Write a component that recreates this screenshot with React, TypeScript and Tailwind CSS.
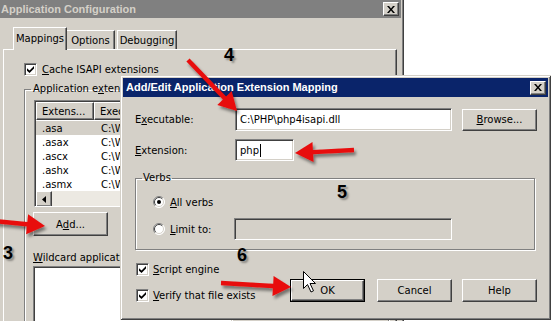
import React from "react";

const raised =
  "border border-t-white border-l-white border-r-[#404040] border-b-[#404040] shadow-[inset_-1px_-1px_0_#808080] bg-[#d4d0c8]";
const sunken =
  "border border-t-[#808080] border-l-[#808080] border-r-white border-b-white shadow-[inset_1px_1px_0_#404040,inset_-1px_-1px_0_#d4d0c8]";
const frame =
  "bg-[#d4d0c8] shadow-[inset_1px_1px_0_#d4d0c8,inset_-1px_-1px_0_#404040,inset_2px_2px_0_#ffffff,inset_-2px_-2px_0_#808080]";
const etched = "border border-[#808080] shadow-[inset_1px_1px_0_#ffffff,1px_1px_0_#ffffff]";
const titleFont = "font-['Liberation_Sans',Arial,sans-serif] font-bold text-[11px]";
const numFont =
  "absolute font-['Liberation_Sans',Arial,sans-serif] font-bold text-[18px] leading-none text-black [text-shadow:2px_2px_2px_rgba(0,0,0,0.35)]";

function CloseBtn() {
  return (
    <span className={`${raised} w-[16px] h-[14px] flex items-center justify-center`}>
      <svg width="8" height="7" viewBox="0 0 8 7">
        <path d="M0 0h2l2 2.5L6 0h2L5 3.5 8 7H6L4 4.5 2 7H0l3-3.5z" fill="black" />
      </svg>
    </span>
  );
}

function Check() {
  return (
    <span className={`${sunken} w-[13px] h-[13px] bg-white flex items-center justify-center shrink-0`}>
      <svg width="7" height="7" viewBox="0 0 7 7">
        <path d="M0 2.2 L2.5 4.6 L7 0 L7 2.6 L2.5 7 L0 4.8Z" fill="black" />
      </svg>
    </span>
  );
}

function Radio({ on }: { on?: boolean }) {
  return (
    <svg width="12" height="12" viewBox="0 0 12 12" className="shrink-0">
      <circle cx="6" cy="6" r="5.5" fill="white" />
      <path d="M2.1 9.9 A5.5 5.5 0 0 1 9.9 2.1" stroke="#808080" fill="none" />
      <path d="M9.9 2.1 A5.5 5.5 0 0 1 2.1 9.9" stroke="#ffffff" fill="none" />
      <path d="M2.8 9.2 A4.5 4.5 0 0 1 9.2 2.8" stroke="#404040" fill="none" />
      <path d="M9.2 2.8 A4.5 4.5 0 0 1 2.8 9.2" stroke="#d4d0c8" fill="none" />
      {on && <circle cx="6" cy="6" r="2" fill="black" />}
    </svg>
  );
}

function arrowPoints(x1: number, y1: number, x2: number, y2: number, w = 2.2, hl = 18, hw = 10) {
  const dx = x2 - x1;
  const dy = y2 - y1;
  const len = Math.hypot(dx, dy);
  const ux = dx / len;
  const uy = dy / len;
  const px = -uy;
  const py = ux;
  const bx = x2 - ux * hl;
  const by = y2 - uy * hl;
  const pts = [
    [x1 + px * w, y1 + py * w],
    [bx + px * w, by + py * w],
    [bx + px * hw, by + py * hw],
    [x2, y2],
    [bx - px * hw, by - py * hw],
    [bx - px * w, by - py * w],
    [x1 - px * w, y1 - py * w],
  ];
  return pts.map((p) => p.map((n) => n.toFixed(1)).join(",")).join(" ");
}

const ARROWS = [
  [-6, 221, 45, 226],
  [188, 60, 237, 111],
  [354, 150, 295, 153],
  [221, 283, 291, 287],
];

const EXTS = [".asa", ".asax", ".ascx", ".ashx", ".asmx"];

export default function App() {
  return (
    <div className="relative w-[551px] h-[321px] overflow-hidden bg-white font-['DejaVu_Sans',sans-serif] text-[10px] text-black">
      {/* Application Configuration (inactive, behind) */}
      <div className={`absolute left-[-4px] top-[-3px] w-[408px] h-[340px] p-[3px] ${frame}`}>
        <div className="h-[18px] bg-[#808080] flex items-center justify-between pl-[2px] pr-[2px]">
          <span className={`${titleFont} text-[#d4d0c8]`}>Application Configuration</span>
          <CloseBtn />
        </div>

        <div className="ml-[4px] w-[394px]">
          {/* tabs */}
          <div className="mt-[10px] h-[21px] flex items-end pl-[10px]">
            <div className="relative z-10 -mb-[1px] h-[23px] w-[54px] bg-[#d4d0c8] border-t border-l border-t-white border-l-white border-r border-r-[#404040] shadow-[inset_-1px_0_0_#808080] flex items-center justify-center pb-[2px]">
              Mappings
            </div>
            <div className="h-[19px] w-[48px] border-t border-t-white border-r border-r-[#404040] shadow-[inset_-1px_0_0_#808080] flex items-center justify-center">
              Options
            </div>
            <div className="ml-[2px] h-[19px] w-[60px] border-t border-l border-t-white border-l-white border-r border-r-[#404040] shadow-[inset_-1px_0_0_#808080] flex items-center justify-center">
              Debugging
            </div>
          </div>

          {/* tab panel */}
          <div className="h-[300px] border-t border-l border-t-white border-l-white border-r border-r-[#404040] shadow-[inset_-1px_0_0_#808080]">
            <div className="mt-[12px] ml-[20px] h-[14px] flex items-center gap-[4px]">
              <Check />
              <span className="ml-[1px]">
                <u>C</u>ache ISAPI extensions
              </span>
            </div>

            <fieldset className={`mt-[7px] ml-[20px] w-[365px] h-[260px] ${etched} border-b-0`}>
              <legend className="ml-[6px] px-[2px] leading-[12px]">
                Application e<u>x</u>tensions
              </legend>

              <div className={`mt-[5px] ml-[9px] w-[200px] h-[107px] bg-white ${sunken} p-[1px] flex flex-col overflow-hidden`}>
                <div className="flex h-[18px] shrink-0">
                  <div className={`${raised} w-[58px] shrink-0 flex items-center pl-[5px]`}>Extens...</div>
                  <div className={`${raised} w-[140px] shrink-0 flex items-center pl-[5px]`}>Executable Path</div>
                </div>
                <div className="flex-1 pt-[1px]">
                  {EXTS.map((e, i) => (
                    <div
                      key={e}
                      className={`flex h-[14px] items-center ${i === 0 ? "bg-[#d4d0c8]" : ""}`}
                    >
                      <span className="w-[58px] shrink-0 pl-[6px]">{e}</span>
                      <span className="shrink-0 pl-[7px] whitespace-nowrap">C:\WINDOWS\system32\inetsrv\asp.dll</span>
                    </div>
                  ))}
                </div>
                <div className="h-[16px] shrink-0 flex bg-[#ece9e2]">
                  <div className={`${raised} w-[16px] h-[16px] flex items-center justify-center`}>
                    <svg width="4" height="7" viewBox="0 0 4 7">
                      <path d="M4 0v7L0 3.5z" fill="black" />
                    </svg>
                  </div>
                </div>
              </div>

              <div className={`${raised} mt-[5px] ml-[8px] w-[75px] h-[24px] flex items-center justify-center`}>
                A<u>d</u>d...
              </div>

              <div className="mt-[16px] ml-[8px] leading-[12px] whitespace-nowrap">
                <u>W</u>ildcard application maps (order of implementation):
              </div>
              <div className={`mt-[2px] ml-[8px] w-[200px] h-[70px] bg-white ${sunken}`} />
            </fieldset>
          </div>
        </div>
      </div>

      {/* Add/Edit Application Extension Mapping (active, front) */}
      <div className={`absolute left-[120px] top-[75px] w-[431px] h-[245px] p-[3px] ${frame}`}>
        <div className="h-[19px] bg-[#0a246a] flex items-center justify-between pl-[3px] pr-[2px]">
          <span className={`${titleFont} text-white`}>Add/Edit Application Extension Mapping</span>
          <CloseBtn />
        </div>

        <div className="pl-[12px]">
          <div className="mt-[11px] flex items-center">
            <span className="w-[100px]">
              E<u>x</u>ecutable:
            </span>
            <div className={`w-[217px] h-[23px] bg-white ${sunken} flex items-center pl-[4px]`}>
              C:\PHP\php4isapi.dll
            </div>
            <div className={`${raised} ml-[10px] w-[75px] h-[22px] flex items-center justify-center`}>
              <span>
                <u>B</u>rowse...
              </span>
            </div>
          </div>

          <div className="mt-[8px] flex items-center">
            <span className="w-[100px]">
              <u>E</u>xtension:
            </span>
            <div className={`w-[59px] h-[22px] bg-white ${sunken} flex items-center pl-[4px]`}>
              php<span className="ml-[1px] w-[1px] h-[13px] bg-black" />
            </div>
          </div>

          <fieldset className={`mt-[11px] w-[400px] ${etched} pb-[9px]`}>
            <legend className="ml-[6px] px-[1px] leading-[12px]">Verbs</legend>
            <div className="mt-[10px] ml-[17px] h-[16px] flex items-center gap-[5px]">
              <Radio on />
              <span>
                <u>A</u>ll verbs
              </span>
            </div>
            <div className="mt-[8px] flex items-center">
              <div className="w-[98px] pl-[17px] flex items-center gap-[5px]">
                <Radio />
                <span>
                  <u>L</u>imit to:
                </span>
              </div>
              <div className={`w-[218px] h-[22px] ${sunken}`} />
            </div>
          </fieldset>

          <div className="flex items-end">
            <div className="w-[155px] flex flex-col">
              <div className="mt-[11px] ml-[1px] h-[16px] flex items-center gap-[4px]">
                <Check />
                <span>
                  <u>S</u>cript engine
                </span>
              </div>
              <div className="mt-[10px] ml-[1px] h-[16px] flex items-center gap-[4px]">
                <Check />
                <span>
                  <u>V</u>erify that file exists
                </span>
              </div>
            </div>
            <div className="mb-[1px] flex">
              <div className="w-[75px] h-[23px] border border-black">
                <div className={`${raised} w-full h-full flex items-center justify-center`}>OK</div>
              </div>
              <div className={`${raised} ml-[12px] w-[75px] h-[23px] flex items-center justify-center`}>Cancel</div>
              <div className={`${raised} ml-[10px] w-[75px] h-[23px] flex items-center justify-center`}>Help</div>
            </div>
          </div>
        </div>
      </div>

      {/* annotations */}
      <svg className="absolute inset-0 pointer-events-none" width="551" height="321" viewBox="0 0 551 321">
        <defs>
          <filter id="sh" x="-20%" y="-20%" width="140%" height="160%">
            <feDropShadow dx="2" dy="3" stdDeviation="1.6" floodColor="#000" floodOpacity="0.45" />
          </filter>
        </defs>
        {ARROWS.map(([x1, y1, x2, y2], i) => (
          <polygon key={i} points={arrowPoints(x1, y1, x2, y2)} fill="#e8100e" filter="url(#sh)" />
        ))}
        <path
          d="M303.5 271.5 v17 l4 -4 l3.5 7.5 l2.5 -1.2 l-3.5 -7.3 h5.5z"
          fill="white"
          stroke="black"
          strokeWidth="1"
          strokeLinejoin="miter"
        />
      </svg>

      <span className={`${numFont} left-[3px] top-[244px]`}>3</span>
      <span className={`${numFont} left-[224px] top-[46px]`}>4</span>
      <span className={`${numFont} left-[337px] top-[183px]`}>5</span>
      <span className={`${numFont} left-[237px] top-[246px]`}>6</span>
    </div>
  );
}
